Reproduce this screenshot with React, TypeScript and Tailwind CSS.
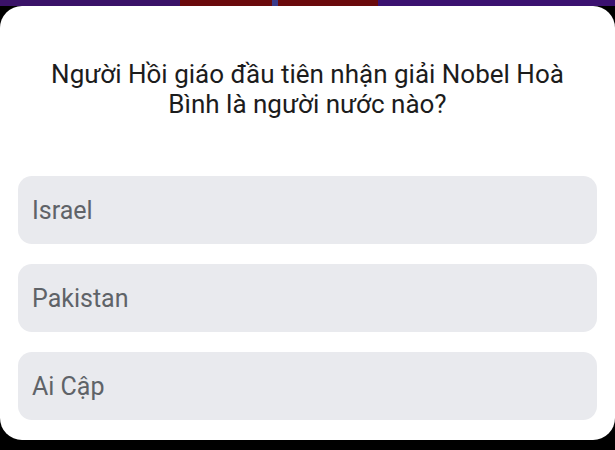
import React from "react";

export default function App() {
  const options = ["Israel", "Pakistan", "Ai Cập"];
  return (
    <div
      className="w-[615px] h-[450px] bg-black flex flex-col overflow-hidden"
      style={{ fontFamily: "Roboto, 'Noto Sans', sans-serif" }}
    >
      <div className="h-[6px] shrink-0 flex bg-[#3d1470]">
        <div className="w-[180px] bg-[#3a1268]" />
        <div className="w-[92px] bg-[#6a0a0c]" />
        <div className="w-[6px] bg-[#3a3a8a]" />
        <div className="w-[100px] bg-[#6a0a0c]" />
        <div className="flex-1 bg-[#3b1170]" />
      </div>
      <div className="h-[434px] shrink-0 bg-white rounded-[22px] flex flex-col px-[18px]">
        <div className="pt-[53px] pb-[57px] text-center text-[26px] leading-[30px] text-[#1c1c1c] px-[14px]">
          Người Hồi giáo đầu tiên nhận giải Nobel Hoà Bình là người nước nào?
        </div>
        <div className="flex flex-col gap-[20px] w-[579px]">
          {options.map((o) => (
            <div
              key={o}
              className="h-[68px] rounded-[14px] bg-[#e9eaee] flex items-center pl-[14px] pt-[2px] text-[25px] text-[#5f6368]"
            >
              {o}
            </div>
          ))}
        </div>
      </div>
    </div>
  );
}
